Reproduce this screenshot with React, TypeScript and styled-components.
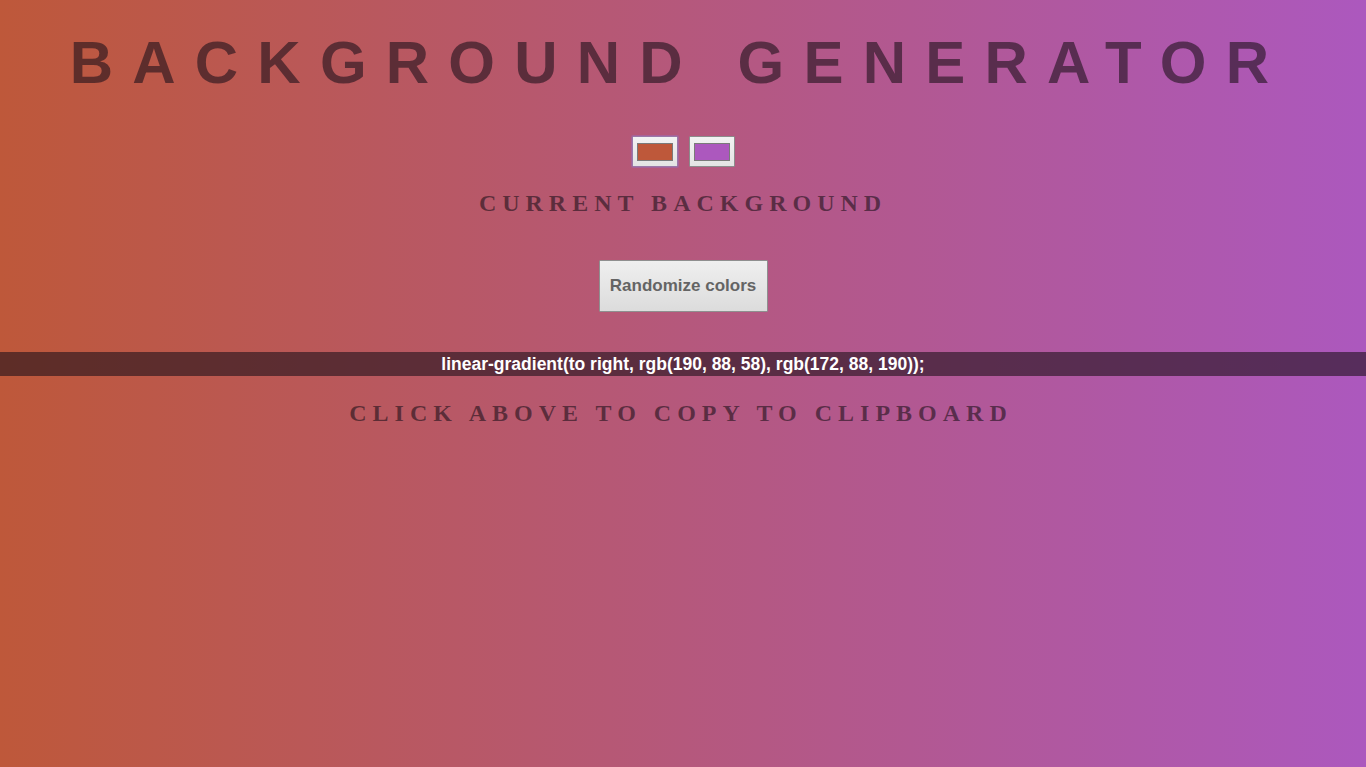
import React, { useState } from "react";
import styled, { createGlobalStyle } from "styled-components";

const GlobalStyle = createGlobalStyle`
  html, body { margin: 0; padding: 0; }
  body { font-family: "Liberation Sans", Arial, sans-serif; }
`;

const Page = styled.div<{ $c1: string; $c2: string }>`
  min-height: 100vh;
  box-sizing: border-box;
  padding-top: 33px;
  display: flex;
  flex-direction: column;
  align-items: center;
  background: linear-gradient(to right, ${(p) => p.$c1}, ${(p) => p.$c2});
`;

const Title = styled.h1`
  margin: 0;
  padding-right: 8px;
  font-family: "Liberation Sans", Arial, sans-serif;
  font-weight: 700;
  font-size: 60px;
  line-height: 60px;
  letter-spacing: 19.2px;
  color: rgba(30, 16, 26, 0.6);
  text-align: center;
  white-space: nowrap;
`;

const Pickers = styled.div`
  margin-top: 43px;
  display: flex;
  gap: 11px;
`;

const ColorInput = styled.input<{ $focused?: boolean }>`
  -webkit-appearance: none;
  appearance: none;
  box-sizing: border-box;
  width: 46px;
  height: 31px;
  margin: 0;
  padding: 6px 4px 5px;
  background: linear-gradient(#f2f2f2, #e4e4e4);
  border: 1px solid ${(p) => (p.$focused ? "#9a78a8" : "#8c8c8c")};
  box-shadow: ${(p) => (p.$focused ? "0 0 0 1px rgba(150, 110, 190, 0.45)" : "none")};
  border-radius: 1px;
  cursor: pointer;
  &::-webkit-color-swatch-wrapper { padding: 0; }
  &::-webkit-color-swatch { border: 1px solid #7a7a7a; border-radius: 0; }
`;

const Subtitle = styled.h3`
  margin: 22px 0 0;
  font-family: "Liberation Serif", "Times New Roman", serif;
  font-weight: 700;
  font-size: 24px;
  line-height: 28px;
  letter-spacing: 6px;
  color: rgba(30, 16, 26, 0.6);
  text-align: center;
  white-space: nowrap;
`;

const RandomButton = styled.button`
  margin-top: 43px;
  box-sizing: border-box;
  width: 169px;
  height: 52px;
  padding: 0;
  font-family: "Liberation Sans", Arial, sans-serif;
  font-weight: 700;
  font-size: 17px;
  color: #646464;
  background: linear-gradient(#efefef, #dcdcdc);
  border: 1px solid #8f8f8f;
  border-radius: 1px;
  cursor: pointer;
`;

const CodeBar = styled.div`
  margin-top: 40px;
  align-self: stretch;
  height: 24px;
  background: rgba(30, 16, 26, 0.6);
  color: #ffffff;
  font-family: "Liberation Sans", Arial, sans-serif;
  font-weight: 700;
  font-size: 17.5px;
  line-height: 24px;
  text-align: center;
  white-space: nowrap;
  cursor: pointer;
`;

const Hint = styled(Subtitle)`
  margin-top: 23px;
  padding-right: 4px;
`;

const toHex = (r: number, g: number, b: number) =>
  "#" + [r, g, b].map((v) => v.toString(16).padStart(2, "0")).join("");

export default function App() {
  const [c1] = useState<[number, number, number]>([190, 88, 58]);
  const [c2] = useState<[number, number, number]>([172, 88, 190]);
  const css1 = `rgb(${c1.join(", ")})`;
  const css2 = `rgb(${c2.join(", ")})`;
  return (
    <>
      <GlobalStyle />
      <Page $c1={css1} $c2={css2}>
        <Title>BACKGROUND GENERATOR</Title>
        <Pickers>
          <ColorInput type="color" defaultValue={toHex(...c1)} $focused />
          <ColorInput type="color" defaultValue={toHex(...c2)} />
        </Pickers>
        <Subtitle>CURRENT BACKGROUND</Subtitle>
        <RandomButton>Randomize colors</RandomButton>
        <CodeBar>{`linear-gradient(to right, ${css1}, ${css2});`}</CodeBar>
        <Hint>CLICK ABOVE TO COPY TO CLIPBOARD</Hint>
      </Page>
    </>
  );
}
